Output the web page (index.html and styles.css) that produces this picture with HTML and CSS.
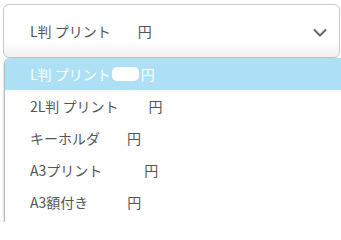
FILE: index.html
```html
<!DOCTYPE html>
<html lang="ja">
<head>
<meta charset="utf-8">
<link rel="stylesheet" href="styles.css">
</head>
<body>
<div class="wrap">
  <div class="select">
    <span class="label">L判 プリント<span class="gap g-sel"></span>円</span>
    <svg class="chev" width="14" height="9" viewBox="0 0 14 9"><path d="M1 1.5 L7 7.5 L13 1.5" fill="none" stroke="#666" stroke-width="2"/></svg>
  </div>
  <ul class="menu">
    <li class="opt active">L判 プリント<span class="mask"></span>円</li>
    <li class="opt">2L判 プリント<span class="gap g-2l"></span>円</li>
    <li class="opt">キーホルダ<span class="gap g-key"></span>円</li>
    <li class="opt">A3プリント<span class="gap g-a3"></span>円</li>
    <li class="opt">A3額付き<span class="gap g-a3f"></span>円</li>
  </ul>
</div>
</body>
</html>
```

FILE: styles.css
```css
html, body {
  margin: 0;
  padding: 0;
  background: #fff;
  width: 341px;
  height: 222px;
  overflow: hidden;
}
body {
  font-family: "Noto Sans CJK JP", "Noto Sans", sans-serif;
  font-size: 14px;
  color: #555;
}
.wrap {
  padding: 4px 1px 0 3px;
}
.select {
  box-sizing: border-box;
  height: 54px;
  border: 1px solid #c9c9c9;
  border-radius: 6px;
  display: flex;
  align-items: center;
  justify-content: space-between;
  padding: 0 12px 0 26px;
  background: linear-gradient(#fff 0%, #fff 70%, #f0f0f0 100%);
}
.label {
  display: flex;
  align-items: center;
  white-space: pre;
}
.chev {
  display: block;
  margin-top: 2px;
}
.gap {
  display: inline-block;
}
.g-sel { width: 27px; }
.g-2l { width: 30px; }
.g-key { width: 27px; }
.g-a3 { width: 42px; }
.g-a3f { width: 39px; }
.menu {
  list-style: none;
  margin: 0 -12px 0 1px;
  padding: 0 0 12px;
  border-left: 1px solid #b9b9b9;
  border-top-left-radius: 6px;
  box-shadow: -1px 0 2px rgba(0, 0, 0, 0.12);
  background: #fff;
  overflow: hidden;
}
.opt {
  height: 32px;
  display: flex;
  align-items: center;
  padding-left: 25px;
  white-space: pre;
}
.opt.active {
  background: #aee0f5;
  color: #fff;
}
.mask {
  display: inline-block;
  width: 27px;
  height: 14px;
  background: #fff;
  border-radius: 5px;
  margin: 0 2px 0 1px;
}
```
